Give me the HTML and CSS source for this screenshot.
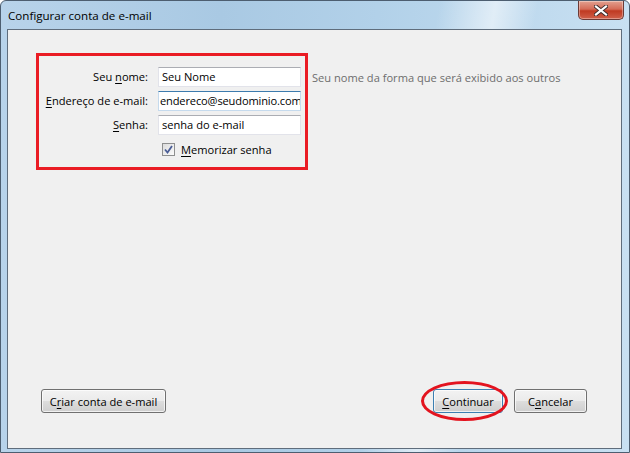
FILE: index.html
```html
<!DOCTYPE html>
<html>
<head>
  <meta charset="utf-8">
  <title>Configurar conta de e-mail</title>
  <link rel="stylesheet" href="styles.css">
</head>
<body>
<div class="window">
  <div class="titlebar">
    <span class="title">Configurar conta de e-mail</span>
    <span class="close-btn">
      <svg width="14" height="11" viewBox="0 0 14 11">
        <path d="M2 1.5 L12 9.5 M12 1.5 L2 9.5" stroke="#3b2a2a" stroke-width="4" stroke-linecap="square"/>
        <path d="M2 1.5 L12 9.5 M12 1.5 L2 9.5" stroke="#fff" stroke-width="2.2" stroke-linecap="square"/>
      </svg>
    </span>
  </div>

  <div class="client">
    <div class="form">
      <label class="lbl">Seu <u>n</u>ome:</label>
      <div class="field">Seu Nome</div>
      <span class="hint">Seu nome da forma que será exibido aos outros</span>

      <label class="lbl"><u>E</u>ndereço de e-mail:</label>
      <div class="field focus">endereco@seudominio.com</div>
      <span></span>

      <label class="lbl"><u>S</u>enha:</label>
      <div class="field">senha do e-mail</div>
      <span></span>

      <span></span>
      <div class="check-row">
        <span class="checkbox">
          <svg width="9" height="9" viewBox="0 0 9 9">
            <path d="M1 4.5 L3.5 7.5 L8 1" fill="none" stroke="#4a5d96" stroke-width="1.8"/>
          </svg>
        </span>
        <span><u>M</u>emorizar senha</span>
      </div>
      <span></span>
    </div>

    <!-- marcação vermelha -->
    <div class="mark-box"></div>

    <div class="buttons">
      <button class="btn"><span>C<u>r</u>iar conta de e-mail</span></button>
      <span class="spacer"></span>
      <span class="circled">
        <button class="btn default"><u>C</u>ontinuar</button>
        <span class="mark-ellipse"></span>
      </span>
      <button class="btn cancel">C<u>a</u>ncelar</button>
    </div>
  </div>
</div>
</body>
</html>
```

FILE: styles.css
```css
html, body {
  margin: 0;
  padding: 0;
}
body {
  width: 630px;
  height: 453px;
  overflow: hidden;
  font-family: "Open Sans", "Noto Sans", sans-serif;
  font-size: 11.1px;
  color: #000;
}
u {
  text-decoration: underline;
  text-underline-offset: 2px;
}

.window {
  box-sizing: border-box;
  width: 630px;
  height: 453px;
  display: flex;
  flex-direction: column;
  border: 1px solid #4d5e70;
  border-radius: 6px 6px 0 0;
  background:
    linear-gradient(100deg, rgba(255,255,255,0) 62%, rgba(255,255,255,.55) 70%, rgba(255,255,255,0) 76%),
    linear-gradient(90deg, #b8d3ea 0%, #a9c9e3 35%, #b2d1e9 60%, #c8e0f2 100%);
  padding: 0 7px 3px 6px;
}

.titlebar {
  height: 28px;
  display: flex;
  align-items: flex-start;
  justify-content: space-between;
}
.title {
  margin: 8px 0 0 1px;
  font-size: 11.6px;
  line-height: 14px;
}
.close-btn {
  width: 46px;
  height: 19px;
  margin-right: -2px;
  box-sizing: border-box;
  display: flex;
  align-items: center;
  justify-content: center;
  border: 1px solid #6b3a36;
  border-top: 0;
  border-radius: 0 0 5px 5px;
  background: linear-gradient(#e2a190 0%, #d46b57 45%, #c03a22 55%, #d0604a 100%);
  box-shadow: inset 0 0 0 1px rgba(255,255,255,.35);
}

.client {
  position: relative;
  flex: 1;
  display: flex;
  flex-direction: column;
  background: #f0f0f0;
  border: 1px solid #5f6d7c;
}

.form {
  display: grid;
  grid-template-columns: 140px 143px auto;
  column-gap: 10px;
  row-gap: 4px;
  padding-top: 37px;
  align-items: center;
}
.lbl {
  text-align: right;
  line-height: 20px;
}
.field {
  box-sizing: border-box;
  height: 20px;
  padding: 0 2px 0 3px;
  background: #fff;
  border: 1px solid #e2e3ea;
  border-top-color: #abadb3;
  line-height: 18px;
  white-space: nowrap;
  overflow: hidden;
}
.field.focus {
  border-color: #c5daed;
  border-top-color: #3d7bad;
  padding: 0 0 0 1px;
  letter-spacing: -0.15px;
}
.hint {
  margin-left: 1px;
  color: #6d6d6d;
  white-space: nowrap;
}
.check-row {
  height: 20px;
  display: flex;
  align-items: center;
  gap: 6px;
  padding-left: 4px;
}
.checkbox {
  box-sizing: border-box;
  width: 13px;
  height: 13px;
  display: flex;
  align-items: center;
  justify-content: center;
  border: 1px solid #8e8f8f;
  background: linear-gradient(135deg, #dcdcdc, #fbfbfb);
}

.mark-box {
  position: absolute;
  left: 28px;
  top: 23px;
  width: 272px;
  height: 117px;
  box-sizing: border-box;
  border: 3px solid #ea1c24;
}

.buttons {
  margin-top: auto;
  display: flex;
  align-items: center;
  padding: 0 34px 35px 33px;
}
.spacer {
  flex: 1;
}
.btn {
  box-sizing: border-box;
  height: 24px;
  padding: 0;
  font: inherit;
  color: #000;
  border: 1px solid #707070;
  border-radius: 3px;
  background: linear-gradient(#f2f2f2 0%, #ebebeb 50%, #dddddd 51%, #cfcfcf 100%);
  box-shadow: inset 0 0 0 1px rgba(255,255,255,.7);
  width: 125px;
}
.btn.default {
  width: 70px;
  border-color: #3c7fb1;
}
.btn.cancel {
  width: 73px;
  margin-left: 11px;
}
.circled {
  position: relative;
  display: flex;
}
.mark-ellipse {
  position: absolute;
  left: -12px;
  right: -5px;
  top: -8px;
  bottom: -8px;
  border: 3px solid #e3141f;
  border-radius: 50%;
}
```
